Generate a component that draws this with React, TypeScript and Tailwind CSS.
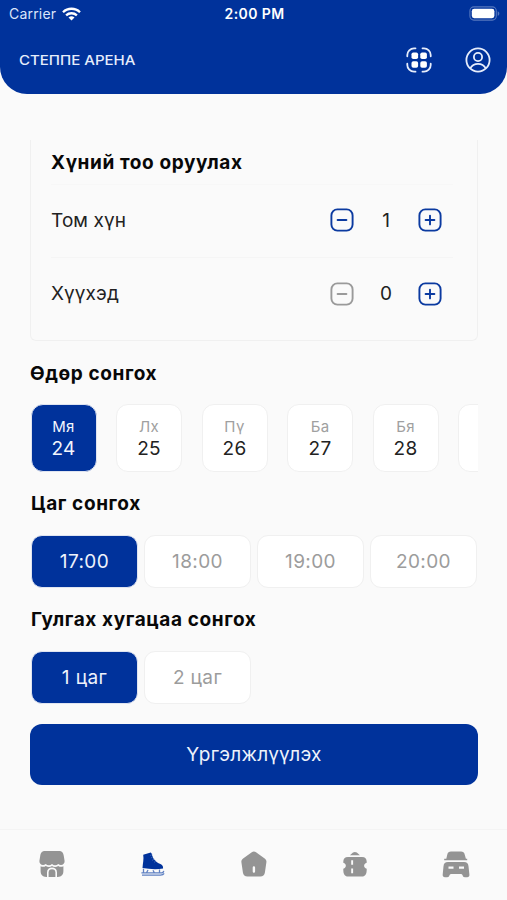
import React, { useState } from 'react';

type CounterProps = {
    label: string;
    value: number;
    onChange: (value: number) => void;
};

const days = [
    { name: 'Мя', date: 24 },
    { name: 'Лх', date: 25 },
    { name: 'Пү', date: 26 },
    { name: 'Ба', date: 27 },
    { name: 'Бя', date: 28 },
];
const hours = ['17:00', '18:00', '19:00', '20:00'];
const durations = ['1 цаг', '2 цаг'];

const SquareIcon: React.FC<{ plus?: boolean }> = ({ plus }) => (
    <svg width="24" height="24" viewBox="0 0 24 24" fill="none" stroke="currentColor" strokeWidth="1.9" strokeLinecap="round">
        <rect x="1.4" y="1.4" width="21.2" height="21.2" rx="6" />
        <path d={plus ? 'M7.6 12h8.8M12 7.6v8.8' : 'M7.6 12h8.8'} />
    </svg>
);

const Counter: React.FC<CounterProps> = ({ label, value, onChange }) => (
    <div className="flex h-[73px] items-center justify-between">
        <span className="text-[19px] tracking-[0.1px] text-[#222]">{label}</span>
        <div className="mr-[11px] flex items-center">
            <button
                type="button"
                disabled={value === 0}
                onClick={() => onChange(value - 1)}
                className="mb-[2px] text-[#0b3aa0] disabled:text-[#9a9a9a]"
            >
                <SquareIcon />
            </button>
            <span className="w-16 text-center text-[19px] text-[#222]">{value}</span>
            <button type="button" onClick={() => onChange(value + 1)} className="mb-[2px] text-[#0b3aa0]">
                <SquareIcon plus />
            </button>
        </div>
    </div>
);

const Heading: React.FC<{ children: React.ReactNode }> = ({ children }) => (
    <h2 className="text-[19px] leading-6 font-bold tracking-[0.6px] text-[#080808]">{children}</h2>
);

const Slot: React.FC<{ active: boolean; onClick: () => void; children: React.ReactNode }> = ({
    active,
    onClick,
    children,
}) => (
    <button
        type="button"
        onClick={onClick}
        className={`h-[53px] w-[107px] rounded-[11px] border pt-[2px] text-[19px] tracking-[0.4px] ${
            active ? 'border-[#dfe4f0] bg-[#00329b] text-[#eef2fb]' : 'border-[#f0f0f0] bg-white text-[#9c9c9c]'
        }`}
    >
        {children}
    </button>
);

const Header = () => (
    <header className="h-[94px] rounded-b-[27px] bg-[#00329b] text-white">
        <div className="grid h-[27px] grid-cols-3 items-center pr-[7px] pl-[9px] text-[14px]">
            <div className="flex items-center gap-[6px] text-[#dbe5fa]">
                <span className="tracking-[0.2px]">Carrier</span>
                <svg width="19" height="14" viewBox="0 0 19 14" fill="none" stroke="#fff" strokeWidth="2.3">
                    <path d="M1 5.2a12.2 12.2 0 0 1 17 0M4.1 8.4a7.8 7.8 0 0 1 10.8 0" />
                    <path d="M9.5 13.6 6.500 10.600a4.300 4.300 0 0 1 6 0z" fill="#fff" stroke="none" />
                </svg>
            </div>
            <span className="text-center text-[14px] font-semibold tracking-[0.4px]">2:00 PM</span>
            <svg className="justify-self-end" width="31" height="15" viewBox="0 0 31 15">
                <rect x="0.9" y="0.9" width="26.4" height="13.2" rx="4" fill="none" stroke="#5577be" strokeWidth="1.1" />
                <rect x="2.8" y="2.8" width="22.6" height="9.4" rx="2.4" fill="#fff" />
                <path d="M28.7 5.2c2.2.8 2.2 3.8 0 4.6z" fill="#5577be" />
            </svg>
        </div>
        <div className="flex h-[65px] items-center justify-between pr-[16px] pl-[19px]">
            <span className="inline-block origin-left scale-x-[1.155] pt-[2px] text-[13px] font-medium whitespace-nowrap text-[#e6edfb]">
                СТЕППЕ АРЕНА
            </span>
            <div className="flex items-center gap-[33px]">
                <svg width="26" height="26" viewBox="0 0 26 26" fill="none" stroke="#e6edfb" strokeWidth="1.8" strokeLinecap="round">
                    <path d="M1.3 9.3V8a6.7 6.7 0 0 1 6.7-6.7h1.500M16.500 1.300H18A6.700 6.700 0 0 1 24.700 8v1.300M24.700 16.700V18a6.700 6.700 0 0 1-6.700 6.700h-1.500M9.500 24.700H8A6.700 6.700 0 0 1 1.300 18v-1.300" />
                    <g fill="#fff" stroke="none">
                        <rect x="5.5" y="5.5" width="6.6" height="6.6" rx="1.8" />
                        <rect x="14.3" y="5.5" width="6.6" height="6.6" rx="1.8" />
                        <rect x="5.5" y="14.2" width="6.6" height="6.6" rx="1.8" />
                        <rect x="14.3" y="14.2" width="6.6" height="6.6" rx="1.8" />
                    </g>
                </svg>
                <svg width="26" height="26" viewBox="0 0 26 26" fill="none" stroke="#e6edfb" strokeWidth="1.8">
                    <circle cx="13" cy="13" r="11.6" />
                    <circle cx="13" cy="10" r="4.1" />
                    <path d="M5.4 21.2C7 18.1 9.600 16.900 13 16.900s6 1.200 7.600 4.300" />
                </svg>
            </div>
        </div>
    </header>
);

const BottomNav = () => (
    <nav className="grid h-[71px] grid-cols-5 justify-items-center border-t border-[#f4f4f4] pt-[20px] pl-[1px] text-[#949494]">
        {/* shop */}
        <svg width="28" height="28" viewBox="0 0 28 28" fill="currentColor">
            <path d="M7 1h14c3.5 0 4.3 2.2 4.8 5l.8 5c.4 3.3-3.5 5.2-6.3 3-2 1.8-4.4 1.8-6.3 0-1.9 1.8-4.3 1.8-6.3 0-2.8 2.2-6.7.3-6.3-3l.8-5C2.7 3.2 3.5 1 7 1z" />
            <path d="M2.6 16.2c2 .9 3.6.7 5.2-.3 2 1.3 4.4 1.3 6.2 0 1.8 1.3 4.2 1.3 6.2 0 1.6 1 3.2 1.2 5.2.3v4.8c0 3.7-2 5.9-5.700 5.900H19v-4.500a5 5 0 0 0-10 0v4.500h-.7c-3.700 0-5.700-2.200-5.700-5.900z" />
            <path d="M10.6 26.900v-4.300a3.400 3.400 0 0 1 6.800 0v4.300z" />
        </svg>
        {/* skate */}
        <svg width="28" height="28" viewBox="0 0 28 28" fill="#00329b">
            <path d="M4.2 4.8 11.7 2.500l1.100 1.300c.8 4.600 3.500 8.200 8.600 10.300 2 .8 2.800 2.100 2.700 4.300-5.800 1.300-13.400.8-20.600-.3C3.800 13.500 5 9 4.200 4.800z" />
            <path d="m11.200 5.500 2-1M11.900 8l2.100-1.300M13 10.500l2.100-1.400M15 12.500l1.900-1.600" stroke="#4269b5" strokeWidth=".8" />
            <path d="M2.400 22.900h20.200c1.400 0 2-.7 2.200-2M4.500 18.800v4M9 20l-1.500 2.800M14 20.300l1.500 2.800M20.500 19.500v3.600M3 25.200h18.500c2 0 3-.6 3.600-1.800" fill="none" stroke="#5f80c2" strokeWidth="1.3" />
        </svg>
        {/* home */}
        <svg width="28" height="28" viewBox="0 0 28 28" fill="currentColor">
            <path fillRule="evenodd" d="M11.800 2.200c1.300-.8 2.900-.8 4.200 0l8.700 6.200c1.300.9 1.900 2.200 1.700 3.800l-1.500 10.200c-.4 2.700-2 4.100-4.600 4.100H7.500c-2.600 0-4.200-1.400-4.600-4.100L1.400 12.200c-.2-1.600.4-2.900 1.700-3.800zM12.700 17.500v4a1.200 1.200 0 0 0 2.400 0v-4a1.200 1.200 0 0 0-2.400 0z" />
        </svg>
        {/* ticket */}
        <svg width="28" height="28" viewBox="0 0 28 28" fill="currentColor">
            <path d="M8.900 5.200 12 2.600c1.300-.9 2.500-.9 3.800 0l3.100 2.600z" />
            <path fillRule="evenodd" d="M7 6.900h14c3.200 0 4.700 1.500 4.700 4.800v1c-3.400.7-3.400 5.300 0 6v1c0 4.300-1.500 6.800-4.700 6.800H7c-3.200 0-4.700-2.500-4.700-6.800v-1c3.400-.7 3.400-5.300 0-6v-1c0-3.300 1.500-4.800 4.700-4.800zM10.200 10.200v4.600h1.900v-4.600zM10.200 18.600v4.600h1.900v-4.600z" />
        </svg>
        {/* parking */}
        <svg width="28" height="28" viewBox="0 0 28 28" fill="currentColor">
            <path d="M9 1.600h10c2 0 3.200.9 3.700 2.800l1.200 4.400h1.300v1.400H2.200V8.800h2.100l1-4.400C5.800 2.500 7 1.600 9 1.600z" />
            <path fillRule="evenodd" d="M6 12h16c2.800 0 4.200 1.400 4.500 4.200l.9 8.300c.2 1.700-.7 2.700-2.300 2.700h-2.200c-2.800 0-1.800-3.200-3.800-3.200H9c-2 0-1 3.200-3.800 3.200H3c-1.600 0-2.500-1-2.300-2.700l.8-8.300C1.800 13.400 3.200 12 6 12zM6.500 16.600v2.100h5v-2.100zM17 16.600v2.100h5v-2.100z" />
        </svg>
    </nav>
);

const App: React.FC<{}> = () => {
    const [adults, setAdults] = useState(1);
    const [children, setChildren] = useState(0);
    const [day, setDay] = useState(24);
    const [hour, setHour] = useState('17:00');
    const [duration, setDuration] = useState('1 цаг');

    return (
        <div className="flex h-[900px] flex-col overflow-hidden bg-[#fafafa] font-[Inter,sans-serif]">
            <Header />
            <main className="flex-1 pt-[46px] pr-[29px] pl-[30px]">
                <section className="h-[201px] rounded-b-[6px] border border-t-0 border-[#f0f0f0] pr-[21px] pl-[20px] pt-[11px]">
                    <Heading>Хүний тоо оруулах</Heading>
                    <div className="mt-[9px] mr-[3px] divide-y divide-[#f5f5f5] border-t border-[#f7f7f7]">
                        <Counter label="Том хүн" value={adults} onChange={setAdults} />
                        <Counter label="Хүүхэд" value={children} onChange={setChildren} />
                    </div>
                </section>

                <section className="pt-[21px]">
                    <Heading>Өдөр сонгох</Heading>
                    <div className="mt-[18px] flex gap-[19.5px] overflow-hidden pl-[0.5px]">
                        {days.map((item) => (
                            <button
                                key={item.date}
                                type="button"
                                onClick={() => setDay(item.date)}
                                className={`flex h-[68px] w-[66px] shrink-0 flex-col items-center rounded-[12px] border pt-[12px] ${
                                    day === item.date
                                        ? 'border-[#dfe4f0] bg-[#00329b] text-[#f3f6fd]'
                                        : 'border-[#f0f0f0] bg-white text-[#222]'
                                }`}
                            >
                                <span
                                    className={`text-[15px] leading-5 tracking-[0.3px] ${
                                        day === item.date ? '' : 'text-[#a0a0a0]'
                                    }`}
                                >
                                    {item.name}
                                </span>
                                <span className="text-[19px] leading-6 tracking-[0.3px]">{item.date}</span>
                            </button>
                        ))}
                        {/* edge of the next card, hints that the list scrolls */}
                        <div className="h-[68px] w-[66px] shrink-0 rounded-[12px] border border-[#f0f0f0] bg-white" />
                    </div>
                </section>

                <section className="px-[1px] pt-[20px]">
                    <Heading>Цаг сонгох</Heading>
                    <div className="mt-[19px] flex justify-between">
                        {hours.map((item) => (
                            <Slot key={item} active={hour === item} onClick={() => setHour(item)}>
                                {item}
                            </Slot>
                        ))}
                    </div>
                </section>

                <section className="px-[1px] pt-[20px]">
                    <Heading>Гулгах хугацаа сонгох</Heading>
                    <div className="mt-[19px] flex gap-[6px]">
                        {durations.map((item) => (
                            <Slot key={item} active={duration === item} onClick={() => setDuration(item)}>
                                {item}
                            </Slot>
                        ))}
                    </div>
                </section>

                <button
                    type="button"
                    className="mt-[20px] h-[61px] w-full rounded-[12px] bg-[#00329b] pt-[2px] text-[19px] tracking-[0.3px] text-[#eef2fb]"
                >
                    Үргэлжлүүлэх
                </button>
            </main>
            <BottomNav />
        </div>
    );
};

export default App;
